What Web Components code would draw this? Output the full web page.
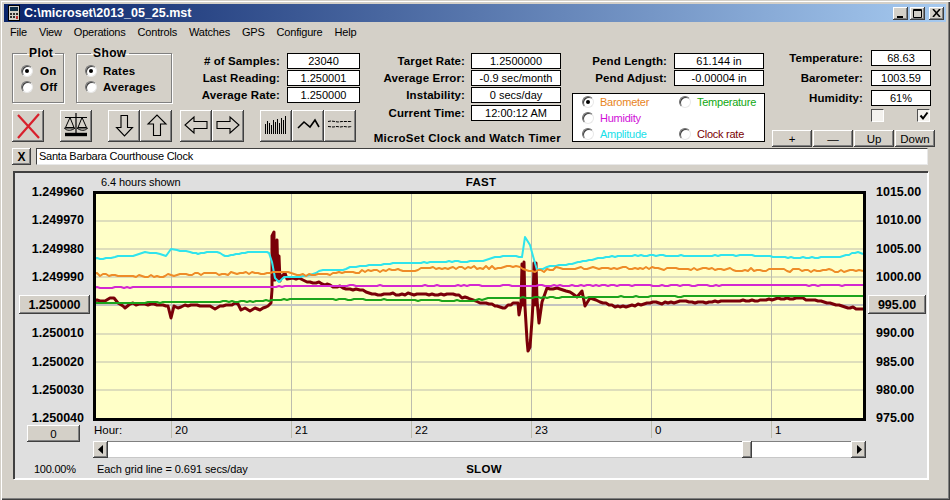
<!DOCTYPE html>
<html><head><meta charset="utf-8"><title>MicroSet</title>
<style>html,body{margin:0;padding:0;background:#d4d0c8}body{font:11px "Liberation Sans",Arial,sans-serif;color:#000}</style>
</head><body>
<ms-window>
  <ms-titlebar>C:\microset\2013_05_25.mst</ms-titlebar>
  <ms-menu><span>File</span><span>View</span><span>Operations</span><span>Controls</span><span>Watches</span><span>GPS</span><span>Configure</span><span>Help</span></ms-menu>
  <ms-top></ms-top>
  <ms-note></ms-note>
  <ms-chart></ms-chart>
</ms-window>
<script>
const RAISED='box-shadow:inset -1px -1px #404040,inset 1px 1px #fff,inset -2px -2px #808080;background:#d4d0c8;';
function reg(name,css,html){
  customElements.define(name,class extends HTMLElement{
    constructor(){super();const s=this.attachShadow({mode:'open'});
      s.innerHTML='<style>'+css+'</style>'+(typeof html==='function'?html(this):html);}
  });
}
const ICONS={
 close:'<svg width="32" height="32"><path d="M6 5L27 28M27 4L6 28" stroke="#d8202c" stroke-width="2.2" fill="none"/></svg>',
 scale:'<svg width="32" height="32" fill="none" stroke="#000"><path d="M16 3V24M5 7.500H27" stroke-width="1.200"/><path d="M10 7.500L5.500 17.500H14ZM22 7.500L18 17.500H26.500Z" stroke-width="1"/><path d="M4.500 18C6 21 12 21 15 18ZM17 18C20 21 26 21 27.500 18Z" stroke-width="1"/><path d="M5 24.500H27" stroke-width="3.400"/></svg>',
 down:'<svg width="32" height="32" fill="#d4d0c8" stroke="#000" stroke-width="1.100"><path d="M13 5.500H19.500V17.500H24.500L16.500 26L8.500 17.500H13Z"/></svg>',
 up:'<svg width="32" height="32" fill="#d4d0c8" stroke="#000" stroke-width="1.100"><path d="M13.500 25.500H20.500V14H26L17 5L8 14H13.500Z"/></svg>',
 left:'<svg width="32" height="32" fill="#d4d0c8" stroke="#000" stroke-width="1.100"><path d="M27 11.500V18.500H14V23L5 15L14 7V11.500Z"/></svg>',
 right:'<svg width="32" height="32" fill="#d4d0c8" stroke="#000" stroke-width="1.100"><path d="M5 11.500V18.500H18V23L27 15L18 7V11.500Z"/></svg>',
 bars:'<svg width="32" height="32" stroke="#000" stroke-width="1"><path d="M5.500 24V14M7.500 24V11M9.500 24V13M11.500 24V15M13.500 24V10M15.500 24V12M17.500 24V9M19.500 24V13M21.500 24V8M23.500 24V10M25.500 24V6"/></svg>',
 wave:'<svg width="32" height="32" fill="none" stroke="#000" stroke-width="1.600"><path d="M6 18L12 12L18 17L23 10L27 17"/></svg>',
 lines:'<svg width="32" height="32" fill="none" stroke="#000" stroke-width="1" stroke-dasharray="3 1"><path d="M4 11.500L7 11L11 11.500L14 12L18 11.500L28 11.500M4 16.500L9 17L13 16.500L16 17L20 16.500L24 17L28 16.500"/></svg>'
};
reg('ms-window',':host{display:flex;flex-direction:column;box-sizing:border-box;width:950px;height:500px;padding:4px 4px 3px;background:#d4d0c8;box-shadow:inset 1px 1px #d4d0c8,inset 2px 2px #fff,inset -1px -1px #404040,inset -2px -2px #808080;overflow:hidden}','<slot></slot>');
reg('ms-titlebar',`:host{display:flex;align-items:center;height:18px;flex:none;background:linear-gradient(90deg,#0a246a,#a6caf0);color:#fff;font:bold 12.500px "Liberation Sans",sans-serif;padding-left:4px}
 svg.i{margin-right:4px;flex:none} .t{flex:1}
 .w{display:flex;gap:2px;margin-right:2px}.b{width:15px;height:13px;${RAISED}display:flex;align-items:center;justify-content:center}`,
 `<svg class="i" width="12" height="16"><rect x=".5" y=".5" width="11" height="15" fill="#d4d0c8" stroke="#000"/><rect x="2" y="2" width="8" height="4" fill="#103048"/><path d="M2 8h2v2H2zM5 8h2v2H5zM8 8h2v2H8zM2 11h2v2H2zM5 11h2v2H5z" fill="#303030"/><path d="M8 11h2v3H8z" fill="#c03030"/></svg><span class="t"><slot></slot></span>
 <span class="w"><span class="b"><svg width="9" height="9"><path d="M1 7h6v2H1z"/></svg></span><span class="b"><svg width="10" height="9"><path d="M.5.500h8v8h-8zM.5 1.500h8" fill="none" stroke="#000"/></svg></span><span class="b" style="margin-left:2px"><svg width="9" height="8"><path d="M1 0L8 8M8 0L1 8" stroke="#000" stroke-width="1.600"/></svg></span></span>`);
reg('ms-menu',':host{display:flex;align-items:center;height:20px;flex:none;gap:12px;padding-left:6px;letter-spacing:-.2px}','<slot></slot>');
reg('ms-radio',`:host{display:flex;align-items:center;height:16px;gap:var(--rg,5px)} 
 .r{width:12px;height:12px;box-sizing:border-box;border-radius:50%;border:1px solid;border-color:#707070 #e8e8e8 #e8e8e8 #707070;background:#fff;box-shadow:inset 1px 1px #404040;display:flex;align-items:center;justify-content:center;flex:none}
 .d{width:4px;height:4px;border-radius:50%;background:#000}`,
 el=>`<span class="r">${el.hasAttribute('on')?'<span class="d"></span>':''}</span><span style="color:${el.getAttribute('color')||'inherit'}"><slot></slot></span>`);
reg('ms-group',`:host{display:block;flex:none} fieldset{margin:0;padding:4px 0 0 8px;box-sizing:border-box;height:56px;width:var(--w);border:1px solid #808080;box-shadow:1px 1px #fff,inset 1px 1px #fff;font:bold 11.500px "Liberation Sans",sans-serif;letter-spacing:.2px}
 legend{padding:0 2px;margin-left:6px;line-height:12px;font-size:12px;letter-spacing:.4px}`,
 el=>`<fieldset><legend>${el.getAttribute('title')}</legend><slot></slot></fieldset>`);
reg('ms-stat',`:host{display:flex;align-items:center;justify-content:flex-end;gap:var(--g,7px);height:16px}
 .l{font:bold 11.500px "Liberation Sans",sans-serif;letter-spacing:.1px;white-space:nowrap;text-align:right}
 .v{width:var(--fw);box-sizing:border-box;height:16px;border:1px solid #000;background:#fff;text-align:center;font:11px/14px "Liberation Sans",sans-serif;flex:none}`,
 el=>`<span class="l">${el.getAttribute('label')}</span><span class="v"><slot></slot></span>`);
reg('ms-btn',`:host{display:flex;align-items:center;justify-content:center;box-sizing:border-box;flex:none;${RAISED}width:var(--bw,32px);height:var(--bh,32px);font:var(--bf,11.500px "Liberation Sans",sans-serif)}`,'<slot></slot>');
reg('ms-check',`:host{display:flex;box-sizing:border-box;width:13px;height:13px;border:1px solid;border-color:#505050 #fff #fff #505050;background:#f4f2ee;align-items:center;justify-content:center}`,
 el=>el.hasAttribute('on')?'<svg width="10" height="10"><path d="M1.500 4.500L4 7.500L8.500 1.500" fill="none" stroke="#000" stroke-width="2"/></svg>':'');
reg('ms-top',`:host{display:flex;flex:none;height:106px;padding-left:8px;box-sizing:border-box}
 .left{width:348px;display:flex;flex-direction:column;flex:none}
 .r1{display:flex;height:68px}
 .groups{display:flex;gap:12px;padding-top:5px}
 .s1{margin-left:auto;padding-top:11px;display:flex;flex-direction:column;gap:1px;--fw:73px;--g:7px}
 .tools{display:flex}.gp{display:flex;margin-right:16px}.gp.n{margin-right:8px}
 .c2{width:195px;margin-left:6px;padding-top:11px;display:flex;flex-direction:column;gap:1px;--fw:90px;--g:6px;flex:none}
 .cap{font:bold 11.500px "Liberation Sans",sans-serif;letter-spacing:.3px;text-align:right;white-space:nowrap;margin-top:9px;line-height:14px}
 .c3{width:193px;margin-left:11px;padding-top:11px;display:flex;flex-direction:column;gap:1px;flex:none;--fw:90px;--g:7px}
 .c3 ms-stat{margin-right:1px}
 .leg{margin-top:6px;height:49px;box-sizing:border-box;border:1px solid #000;background:#fff;display:grid;grid-template-columns:97px 1fr;grid-auto-rows:16px;padding:0 0 0 9px;align-content:center;font-size:11px;letter-spacing:-.25px;--rg:6px}
 .c4{margin-left:7px;width:163px;flex:none;padding-top:8px;display:flex;flex-direction:column;--fw:60px;--g:8px;gap:4px}
 .c4 ms-stat{margin-right:4px}
 .chk{display:flex;justify-content:space-between;padding:0 5px 0 99px;margin-top:-1px}
 .bt{display:flex;gap:1px;margin-top:4px;--bw:40px;--bh:17px}`,
 `<div class="left"><div class="r1"><div class="groups">
   <ms-group title="Plot" style="--w:52px"><ms-radio on style="--rg:7px">On</ms-radio><ms-radio style="--rg:7px">Off</ms-radio></ms-group>
   <ms-group title="Show" style="--w:96px"><ms-radio on style="--rg:6px">Rates</ms-radio><ms-radio style="--rg:6px">Averages</ms-radio></ms-group>
  </div><div class="s1"><ms-stat label="# of Samples:">23040</ms-stat><ms-stat label="Last Reading:">1.250001</ms-stat><ms-stat label="Average Rate:">1.250000</ms-stat></div></div>
  <div class="tools"><div class="gp"><ms-btn>${ICONS.close}</ms-btn></div><div class="gp"><ms-btn>${ICONS.scale}</ms-btn></div><div class="gp n"><ms-btn>${ICONS.down}</ms-btn><ms-btn>${ICONS.up}</ms-btn></div><div class="gp"><ms-btn>${ICONS.left}</ms-btn><ms-btn>${ICONS.right}</ms-btn></div><div class="gp"><ms-btn>${ICONS.bars}</ms-btn><ms-btn>${ICONS.wave}</ms-btn><ms-btn>${ICONS.lines}</ms-btn></div></div></div>
 <div class="c2"><ms-stat label="Target Rate:">1.2500000</ms-stat><ms-stat label="Average Error:">-0.9 sec/month</ms-stat><ms-stat label="Instability:">0 secs/day</ms-stat><ms-stat label="Current Time:" style="margin-top:1px">12:00:12 AM</ms-stat><div class="cap">MicroSet Clock and Watch Timer</div></div>
 <div class="c3"><ms-stat label="Pend Length:">61.144 in</ms-stat><ms-stat label="Pend Adjust:">-0.00004 in</ms-stat>
  <div class="leg"><ms-radio on color="#e8841c">Barometer</ms-radio><ms-radio color="#10a810">Temperature</ms-radio><ms-radio color="#d010d8">Humidity</ms-radio><span></span><ms-radio color="#18e0e8">Amplitude</ms-radio><ms-radio color="#7a0000">Clock rate</ms-radio></div></div>
 <div class="c4"><ms-stat label="Temperature:">68.63</ms-stat><ms-stat label="Barometer:">1003.59</ms-stat><ms-stat label="Humidity:">61%</ms-stat>
  <div class="chk"><ms-check></ms-check><ms-check on></ms-check></div>
  <div class="bt"><ms-btn>+</ms-btn><ms-btn>—</ms-btn><ms-btn>Up</ms-btn><ms-btn>Down</ms-btn></div></div>`);
reg('ms-note',`:host{display:flex;flex:none;height:17px;padding-left:8px;gap:5px;margin-bottom:6px}
 .f{width:892px;box-sizing:border-box;background:#fff;border:1px solid;border-color:#404040 #e8e8e8 #e8e8e8 #404040;padding-left:2px;line-height:15px;font-size:11px;letter-spacing:-.25px}`,
 `<ms-btn style="--bw:19px;--bh:17px;--bf:bold 12px 'Liberation Sans',sans-serif">X</ms-btn><div class="f">Santa Barbara Courthouse Clock</div>`);

const S={
 red:[[94,301],[105,301],[110,298],[114,298],[118,303],[123,306],[125,308],[130,304],[160,305],[168,306],[171,318],[174,306],[178,308],[185,305],[210,306],[215,309],[220,306],[238,304],[241,310],[245,308],[250,311],[255,308],[260,310],[268,306],[271,303],[272,290],[272,236],[274,232],[274,280],[275,280],[275,250],[276,246],[277,240],[278,280],[279,256],[280,281],[282,276],[285,273],[287,279],[293,278],[303,280],[307,282],[327,284],[337,287],[350,289],[360,290],[375,294],[420,294],[450,294],[470,299],[480,303],[497,306],[505,308],[513,303],[518,303],[519,315],[521,305],[522,264],[523,305],[524,262],[525,307],[527,340],[528,351],[530,347],[532,320],[533,303],[534,263],[535,305],[536,263],[537,300],[539,323],[542,302],[547,288],[557,288],[570,292],[577,297],[582,291],[585,306],[590,298],[600,302],[620,307],[650,303],[700,302],[740,301],[760,300],[800,298],[830,303],[850,308],[863,309]],
 cyan:[[94,259],[108,258],[115,257],[133,256],[145,252],[150,253],[160,254],[166,256],[171,249],[177,250],[190,252],[198,254],[207,252],[217,252],[225,256],[233,255],[250,252],[267,252],[269,253],[272,262],[275,278],[279,282],[283,278],[285,277],[297,277],[310,275],[323,270],[343,270],[350,267],[360,266],[400,263],[440,262],[480,261],[497,257],[513,256],[522,257],[525,237],[530,245],[537,270],[547,267],[563,265],[580,262],[600,258],[620,256],[660,255],[700,256],[740,255],[800,258],[840,257],[858,252],[863,254]],
 orange:[[94,274],[130,276],[165,276],[180,274],[270,273],[285,272],[300,275],[350,272],[400,270],[450,268],[520,267],[535,272],[560,268],[640,268],[700,269],[760,270],[863,271]],
 magenta:[[94,288],[165,287],[270,287],[290,286],[863,285]],
 green:[[94,303],[130,303],[170,302],[190,302],[260,301],[300,299],[400,300],[470,301],[490,298],[600,297],[700,296],[863,296]]
};
function path(pts,amp,seed){
  let r=seed,out=[];const rnd=()=>{r=(r*16807)%2147483647;return r/2147483647-.5};
  pts.forEach((p,i)=>{out.push(p);const q=pts[i+1];if(!q)return;const d=q[0]-p[0];if(d<7)return;
    for(let x=p[0]+3;x<q[0]-1;x+=3){const t=(x-p[0])/d;out.push([x,Math.round(p[1]+(q[1]-p[1])*t+rnd()*amp*2)]);}});
  return 'M'+out.map(p=>p.join(' ')).join('L');
}
const hg=[221,249,277,334,362,390].map(y=>`<path d="M94 ${y}H865" stroke="#bdbdae"/>`).join('');
const vg=[171,291,411,531,651,771].map(x=>`<path d="M${x}.5 194V420" stroke="#bdbdae"/>`).join('');
reg('ms-plot',':host{display:block;width:773px;height:230px}svg{display:block}',
 `<svg width="773" height="230" viewBox="93 191 773 230"><rect x="93" y="191" width="773" height="230" fill="#ffffc8"/>${hg}${vg}
 <path d="M94 305H865" stroke="#c4c4c0" stroke-width="2"/>
 <g fill="none" stroke-linejoin="round">
 <path d="${path(S.red,1,11)}" stroke="#7a0008" stroke-width="3"/>
 <path d="${path(S.cyan,.5,5)}" stroke="#30e4ec" stroke-width="2"/>
 <path d="${path(S.orange,1.500,7)}" stroke="#ee8c28" stroke-width="2"/>
 <path d="${path(S.magenta,.5,3)}" stroke="#d428d0" stroke-width="2"/>
 <path d="${path(S.green,.5,9)}" stroke="#1ca41c" stroke-width="2"/></g>
 <rect x="94.500" y="192.500" width="770" height="227" fill="none" stroke="#000" stroke-width="3"/></svg>`);
reg('ms-scroll',`:host{display:flex;height:17px;background:#fff;box-shadow:inset 0 1px #808080,inset 0 -1px #c8c8c8}
 .a{--bw:15px;--bh:17px}.s1{flex:634}.s2{flex:99}.t{width:10px;flex:none;--bw:10px;--bh:17px}`,
 `<ms-btn class="a"><svg width="6" height="9"><path d="M5 0V9L0 4.500Z"/></svg></ms-btn><div class="s1"></div><ms-btn class="t"></ms-btn><div class="s2"></div><ms-btn class="a"><svg width="6" height="9"><path d="M1 0V9L6 4.500Z"/></svg></ms-btn>`);
const tick=t=>`<div class="tk">${t}</div>`;
reg('ms-chart',`:host{display:grid;flex:none;width:915px;height:308px;margin-left:9px;box-sizing:border-box;padding:2px 0 0 2px;background:#dfdfdf;
   box-shadow:inset 2px 2px #404040,inset -1px -1px #fff,1px 1px #fff;grid-template-columns:78px 773px 1fr;grid-template-rows:18px 230px 20px 17px 1fr}
 .ax{grid-row:1/4;display:flex;flex-direction:column;padding-top:12px;--bh:19px}
 .ticks{height:240px;display:flex;flex-direction:column;justify-content:space-between;font:bold 12.500px "Liberation Sans",sans-serif;flex:none}
 .tk{height:14px;line-height:14px;display:flex;align-items:center;justify-content:flex-end;padding-right:9px;white-space:nowrap}
 .r .tk{justify-content:flex-start;padding:0 0 0 10px}
 .tk ms-btn{--bf:bold 12.500px "Liberation Sans",sans-serif;margin:-3px -6px -2px 0;--bw:71px}
 .r .tk ms-btn{margin:-3px 0 -2px -8px;--bw:58px}
 .z{--bw:53px;--bh:17px;margin-left:12px}
 .hd{display:grid;grid-template-columns:1fr auto 1fr;align-items:center;font-size:11px;letter-spacing:-.08px}
 .hd b{font:bold 11.500px "Liberation Sans",sans-serif;letter-spacing:.3px;padding-left:var(--o)}
 .hd span{padding-left:var(--p)}
 .hrs{display:grid;grid-template-columns:78px repeat(5,120px) 1fr;font-size:11.500px;height:17px}
 .hrs>div{padding:3px 0 0 4px;box-shadow:inset 1px 0 #bdbdae}.hrs>div:first-child{box-shadow:none;padding-left:1px}
 .pct{font-size:11px;letter-spacing:-.25px;align-self:center;padding-left:19px}`,
 `<div class="ax"><div class="ticks">${['1.249960','1.249970','1.249980','1.249990'].map(tick).join('')}<div class="tk"><ms-btn>1.250000</ms-btn></div>${['1.250010','1.250020','1.250030','1.250040'].map(tick).join('')}</div><ms-btn class="z">0</ms-btn></div>
 <div class="hd" style="--p:8px;--o:3px"><span>6.4 hours shown</span><b>FAST</b><i></i></div>
 <div class="ax r"><div class="ticks">${['1015.00','1010.00','1005.00','1000.00'].map(tick).join('')}<div class="tk"><ms-btn>995.00</ms-btn></div>${['990.00','985.00','980.00','975.00'].map(tick).join('')}</div></div>
 <ms-plot style="grid-column:2;grid-row:2"></ms-plot>
 <div class="hrs" style="grid-column:2;grid-row:3"><div>Hour:</div><div>20</div><div>21</div><div>22</div><div>23</div><div>0</div><div>1</div></div>
 <ms-scroll style="grid-column:2;grid-row:4"></ms-scroll>
 <div class="pct" style="grid-column:1;grid-row:5">100.00%</div>
 <div class="hd" style="grid-column:2;grid-row:5;--p:4px;--o:9px"><span>Each grid line = 0.691 secs/day</span><b>SLOW</b><i></i></div>`);
</script>
</body></html>
